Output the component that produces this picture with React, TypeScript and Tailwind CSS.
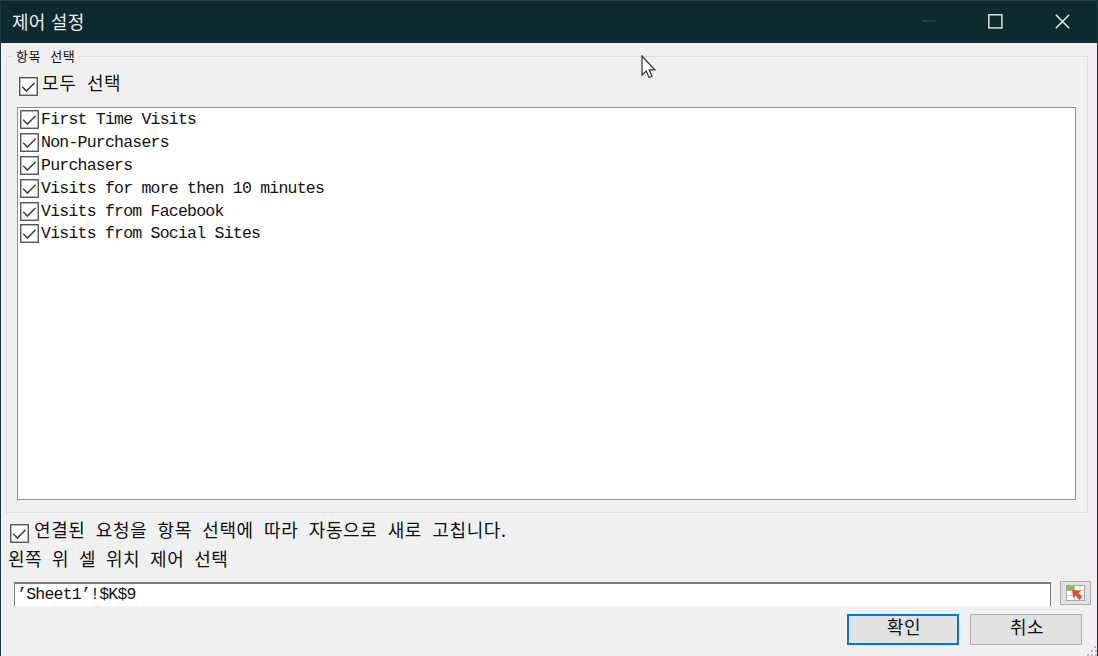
import { useState } from 'react';

const korean = "font-['Noto_Sans_CJK_KR','Noto_Sans',sans-serif]";
const mono = "font-['Liberation_Mono',monospace] tracking-[-0.77px]";

const items = [
  'First Time Visits',
  'Non-Purchasers',
  'Purchasers',
  'Visits for more then 10 minutes',
  'Visits from Facebook',
  'Visits from Social Sites',
];

function CheckBox({ checked, onChange, className = '' }: { checked: boolean; onChange: () => void; className?: string }) {
  return (
    <button role="checkbox" aria-checked={checked} onClick={onChange} className={`block size-[19px] shrink-0 ${className}`}>
      <svg width="19" height="19" viewBox="0 0 19 19" fill="none" className="block">
        <rect x="0.75" y="0.75" width="17.5" height="17.5" fill="#fff" stroke="#484848" strokeWidth="1.3" />
        {checked && <path d="M3.2 9.8 7.4 14 15.6 5.8" stroke="#444" strokeWidth="1.6" />}
      </svg>
    </button>
  );
}

function TitleBar() {
  return (
    <header className="flex h-[43px] shrink-0 items-center border-t border-[#293f48] bg-[#0f2931] pl-[11px] pr-px text-[#e9eef0]">
      <h1 className={`${korean} flex-1 pb-[2px] text-[18px] leading-[40px] tracking-[0.3px] [word-spacing:0.8px]`}>제어 설정</h1>
      <button className="flex h-full w-[67px] items-center justify-center pb-px">
        <svg width="14" height="15" viewBox="0 0 14 15"><path d="M0 7h14" stroke="#354b53" strokeWidth="1.3" /></svg>
      </button>
      <button className="flex h-full w-[66px] items-center justify-center pb-px">
        <svg width="15" height="15" viewBox="0 0 15 15" fill="none"><rect x="0.8" y="0.8" width="13.1" height="13.1" stroke="#e6eced" strokeWidth="1.4" /></svg>
      </button>
      <button className="flex h-full w-[68px] items-center justify-center pb-px">
        <svg width="15" height="15" viewBox="0 0 15 15" fill="none"><path d="m.8.8 13.4 13.4M14.2.8.8 14.2" stroke="#e6eced" strokeWidth="1.5" /></svg>
      </button>
    </header>
  );
}

function CellPickerIcon() {
  return (
    <svg width="19" height="16" viewBox="0 0 19 16" fill="none">
      <rect x="0.5" y="0.5" width="18" height="15" fill="#fff" stroke="#a7a7a7" />
      <path d="M1 5.5h17M1 10.5h17M8.5 1v14M14 1v14" stroke="#c9c9c9" />
      <path d="M1 1h7.5v4.5H1z" fill="#83c340" />
      <path d="m6 5 8.4 1.1-2.1 2 3.8 4.1-2.7 2.5-3.7-4.2-2.1 2.4z" fill="#ea4a32" stroke="#d96650" strokeWidth=".5" />
    </svg>
  );
}

export default function App() {
  const [checked, setChecked] = useState(items.map(() => true));
  const [refresh, setRefresh] = useState(true);
  const all = checked.every(Boolean);

  return (
    <main className="relative flex h-[656px] w-[1098px] flex-col overflow-hidden border-x border-[#1c363f] bg-[#f0f0f0] text-[#111]">
      <TitleBar />
      <fieldset className="ml-[5px] mt-[4px] flex h-[466px] w-[1082px] min-w-0 flex-col border border-[#dcdcdc] px-[10px]">
        <legend className={`${korean} -ml-[4px] h-[18px] px-[3px] text-[13px] leading-[17px] tracking-[0.6px] [word-spacing:5.5px]`}>항목 선택</legend>
        <div className="flex h-[42px] pl-[2px]">
          <CheckBox checked={all} onChange={() => setChecked(items.map(() => !all))} className="mt-[12px]" />
          <span className={`${korean} ml-[4px] mt-[4px] text-[18px] leading-[26px] tracking-[0.6px] [word-spacing:6px]`}>모두 선택</span>
        </div>
        <ul className="h-[393px] w-[1059px] border border-[#8b8e94] bg-white pl-[2px] pt-[1px]">
          {items.map((item, i) => (
            <li key={item} className="flex h-[22.9px] items-start">
              <CheckBox
                checked={checked[i]}
                onChange={() => setChecked(checked.map((v, j) => (i === j ? !v : v)))}
                className="mt-[1px]"
              />
              <span className={`${mono} ml-[2px] whitespace-pre text-[16.5px] leading-[21px]`}>{item}</span>
            </li>
          ))}
        </ul>
      </fieldset>
      <div className="flex h-[32px] pl-[9px]">
        <CheckBox checked={refresh} onChange={() => setRefresh(!refresh)} className="mt-[11px]" />
        <span className={`${korean} ml-[5px] mt-[3px] whitespace-nowrap text-[18px] leading-[26px] tracking-[0.6px] [word-spacing:5.7px]`}>
          연결된 요청을 항목 선택에 따라 자동으로 새로 고칩니다.
        </span>
      </div>
      <p className={`${korean} h-[36px] pl-[7px] text-[18px] leading-[26px] tracking-[0.5px] [word-spacing:5.4px]`}>왼쪽 위 셀 위치 제어 선택</p>
      <div className="flex h-[33px] pl-[13px]">
        <input
          defaultValue="’Sheet1’!$K$9"
          className={`${mono} mt-[1px] h-[24px] w-[1037px] border-x border-t-2 border-[#7d7d7d] bg-white pl-[2px] text-[16.5px] outline-none`}
        />
        <button className="ml-[9px] flex h-[24px] w-[31px] items-center justify-center border border-[#adadad] bg-[#e2e2e2]">
          <CellPickerIcon />
        </button>
      </div>
      <footer className="flex justify-end gap-[11px] pr-[15px]">
        <button className={`${korean} h-[31px] w-[112px] border-2 border-[#0078d7] bg-[#e2e2e2] pb-[7px] pl-[2px] text-[18px] leading-[20px] tracking-[0.4px]`}>확인</button>
        <button className={`${korean} h-[31px] w-[112px] border border-[#adadad] bg-[#e2e2e2] pb-[7px] pl-[2px] text-[18px] leading-[20px] tracking-[0.4px]`}>취소</button>
      </footer>
      <svg className="absolute bottom-0 right-0" width="10" height="10" viewBox="0 0 10 10" fill="#b5b5b5">
        <path d="M7 0h2v2H7zM4 4h2v2H4zM8 4h2v2H8zM0 8h2v2H0zM4 8h2v2H4zM8 8h2v2H8z" />
      </svg>
      <svg className="absolute left-[640px] top-[55px]" width="15" height="25" viewBox="0 0 15 25" fill="none">
        <path d="M1 1v19l4.2-4 2.8 6.5 3-1.3-2.8-6.4h5.5z" fill="#fff" stroke="#32323a" strokeWidth="1.2" />
      </svg>
    </main>
  );
}
